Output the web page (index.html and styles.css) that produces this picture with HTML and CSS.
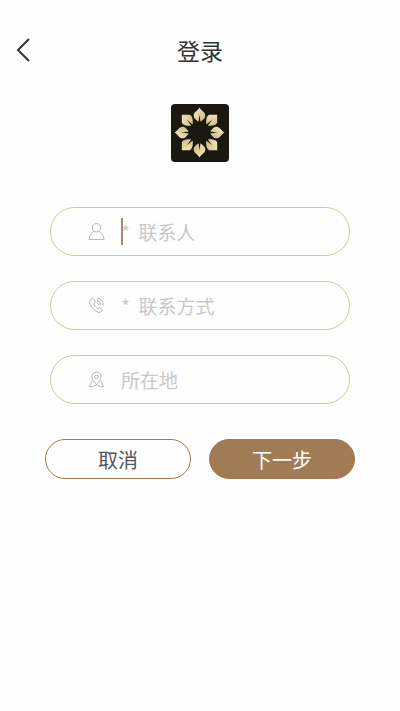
FILE: index.html
```html
<!DOCTYPE html>
<html lang="zh-CN">
<head>
    <meta charset="utf-8">
    <meta name="viewport" content="width=device-width, initial-scale=1">
    <title>登录</title>
    <link rel="stylesheet" href="styles.css">
</head>
<body>
    <header class="topbar">
        <button class="back" type="button" aria-label="返回">
            <svg width="16" height="26" viewBox="0 0 16 26"><path d="M14 2L3 13l11 11"/></svg>
        </button>
        <h1>登录</h1>
    </header>
    <main>
        <svg class="logo" viewBox="0 0 58 58" aria-hidden="true">
            <defs>
                <linearGradient id="gold" x1="0" y1="0" x2="1" y2="1">
                    <stop offset="0" stop-color="#f6ecc4"/>
                    <stop offset="1" stop-color="#ceb67e"/>
                </linearGradient>
                <g id="petal">
                    <path fill="url(#gold)" d="M0-25C2-21.500 5.800-20.500 5.800-17C5.800-14 3.500-13 1.500-11H-1.500C-3.500-13-5.800-14-5.800-17C-5.800-20.500-2-21.500 0-25z"/>
                    <path fill="#1b1812" d="M0-18L1-10H-1z"/>
                </g>
                <g id="corner">
                    <path fill="url(#gold)" d="M0-25L5.800-19.200C6.300-15.500 4-13.500 1.500-11H-1.500C-4-13.500-6.300-15.500-5.800-19.200z"/>
                    <path fill="#1b1812" d="M0-18L1-10H-1z"/>
                </g>
            </defs>
            <rect width="58" height="58" rx="4" fill="#1b1812"/>
            <g transform="translate(28.500 28.500)">
                <use href="#petal"/>
                <use href="#corner" transform="rotate(45)"/>
                <use href="#petal" transform="rotate(90)"/>
                <use href="#corner" transform="rotate(135)"/>
                <use href="#petal" transform="rotate(180)"/>
                <use href="#corner" transform="rotate(225)"/>
                <use href="#petal" transform="rotate(270)"/>
                <use href="#corner" transform="rotate(315)"/>
            </g>
        </svg>
        <form>
            <div class="field">
                <label for="contact">
                    <svg viewBox="0 0 18 18"><circle cx="9" cy="5" r="4.500"/><path d="M6.300 8.800C3.500 10.500 1.500 13 1 17.400h16C16.500 13 14.500 10.500 11.700 8.800"/></svg>
                </label>
                <div class="entry">
                    <input id="contact" type="text" aria-label="联系人" placeholder="*  联系人">
                    <span class="caret"></span>
                </div>
            </div>
            <div class="field">
                <label for="phone">
                    <svg viewBox="0 0 18 18"><path d="M2.500 3.200L4.500 1.500Q5.300 1 6 2L7.500 4.500Q8 5.500 7 6.200Q5.800 7 6.400 8.200Q7.500 10.500 9.500 12Q10.500 12.800 11.300 11.800Q12 10.900 13 11.600L15 13.200Q15.800 14 15 14.800L13.500 16Q11.500 17.200 8 14.800Q3.500 11.200 2 7Q1.300 4.500 2.500 3.200zM9.500 1.200Q15.800 2.300 16.300 9M9.500 3.600Q13.300 4.500 14 9M9.500 6Q11.300 6.800 11.700 8.800"/></svg>
                </label>
                <div class="entry">
                    <input id="phone" type="tel" aria-label="联系方式" placeholder="*  联系方式">
                </div>
            </div>
            <div class="field">
                <label for="place">
                    <svg viewBox="0 0 18 18"><path d="M9 14.500Q4 9.500 4 6.200a5 5 0 0 1 10 0Q14 9.500 9 14.500zM4.500 10.500L1.500 16.500H5L9 14.500L13 16.500h3.500L13.500 10.500"/><circle cx="9" cy="6.200" r="2"/></svg>
                </label>
                <div class="entry">
                    <input id="place" type="text" aria-label="所在地" placeholder="所在地">
                </div>
            </div>
            <div class="actions">
                <button class="btn" type="button">取消</button>
                <button class="btn next" type="submit">下一步</button>
            </div>
        </form>
    </main>
</body>
</html>
```
FILE: styles.css
```css
*{
    box-sizing: border-box;
}
body{
    margin: 0;
    background-color: #fefefe;
    font-family: "Noto Sans CJK SC", sans-serif;
    color: #333;
}
button, input{
    font-family: inherit;
}
.topbar{
    display: grid;
    grid-template-columns: 48px 1fr 48px;
    align-items: center;
    height: 100px;
}
.back{
    display: flex;
    align-items: center;
    height: 48px;
    padding: 0 15px;
    border: 0;
    background: none;
}
.back svg{
    fill: none;
    stroke: #333;
    stroke-width: 2;
}
h1{
    margin: 0;
    font-size: 23px;
    line-height: 32px;
    font-weight: 400;
    text-align: center;
}
.logo{
    display: block;
    width: 58px;
    margin: 4px auto 45px;
}
.field{
    display: flex;
    align-items: center;
    height: 49px;
    margin: 0 50px 25px;
    padding: 0 30px 0 37px;
    border: 1px solid #d3c795;
    border-radius: 25px;
}
.field label{
    display: flex;
    margin-right: 16px;
}
.field svg{
    width: 17px;
    height: 17px;
    fill: none;
    stroke: #b0b0b0;
    stroke-width: 1;
}
.entry{
    position: relative;
    flex: 1;
    min-width: 0;
}
.entry input{
    display: block;
    width: 100%;
    height: 28px;
    padding: 0;
    border: 0;
    outline: 0;
    background: none;
    color: #333;
    font-size: 19px;
}
.entry input::placeholder{
    color: #c8c8c8;
}
/* text cursor */
.caret{
    position: absolute;
    top: 0;
    left: 0;
    width: 2px;
    height: 27px;
    background-color: #a68b70;
}
.actions{
    display: flex;
    gap: 18px;
    margin: 35px 45px;
}
.btn{
    flex: 1;
    height: 40px;
    padding: 0;
    border: 1px solid #9f7a52;
    border-radius: 20px;
    background-color: #fefefe;
    color: #555;
    font-size: 20px;
}
.next{
    background-color: #a17b53;
    color: #fff;
}
```
